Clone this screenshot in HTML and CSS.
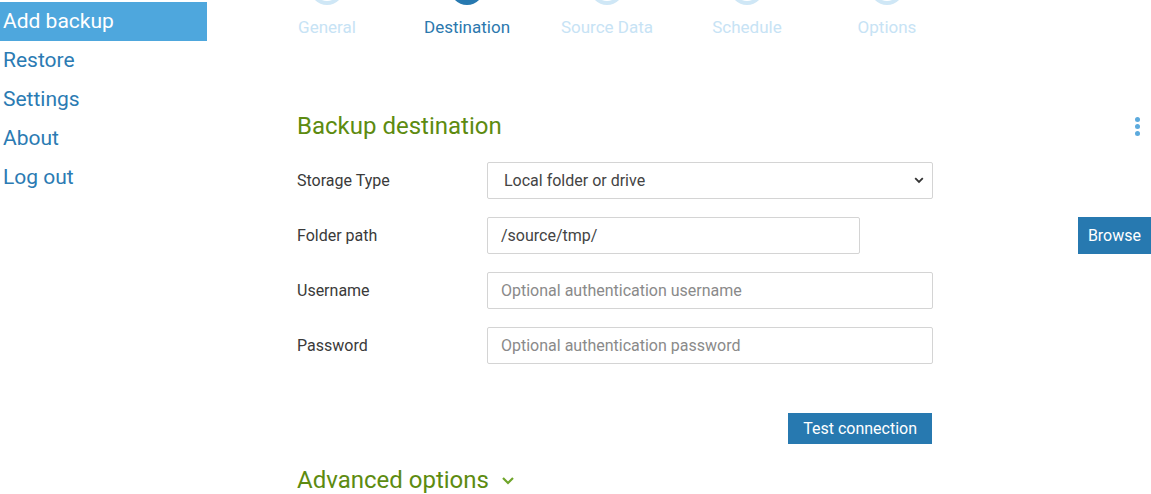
FILE: index.html
```html
<!DOCTYPE html>
<html>
<head>
<meta charset="utf-8">
<link rel="stylesheet" href="styles.css">
</head>
<body>
<div class="page">
  <nav class="sidebar">
    <a class="nav-item active">Add backup</a>
    <a class="nav-item">Restore</a>
    <a class="nav-item">Settings</a>
    <a class="nav-item">About</a>
    <a class="nav-item">Log out</a>
  </nav>
  <main class="main">
    <div class="steps">
      <div class="step"><span class="dot"></span><span class="step-label">General</span></div>
      <div class="step current"><span class="dot"></span><span class="step-label">Destination</span></div>
      <div class="step"><span class="dot"></span><span class="step-label">Source Data</span></div>
      <div class="step"><span class="dot"></span><span class="step-label">Schedule</span></div>
      <div class="step"><span class="dot"></span><span class="step-label">Options</span></div>
    </div>
    <div class="content">
      <div class="title-row">
        <h2 class="title">Backup destination</h2>
        <span class="kebab"><i></i><i></i><i></i></span>
      </div>
      <div class="form">
        <div class="row">
          <label class="label">Storage Type</label>
          <div class="field">
            <div class="select">
              <span>Local folder or drive</span>
              <svg width="10" height="7" viewBox="0 0 10 7"><path d="M1.2 1.2 L5 5 L8.8 1.2" fill="none" stroke="#333" stroke-width="1.8"/></svg>
            </div>
          </div>
        </div>
        <div class="row wide">
          <label class="label">Folder path</label>
          <div class="field grow">
            <div class="input short">/source/tmp/</div>
            <button class="btn browse">Browse</button>
          </div>
        </div>
        <div class="row">
          <label class="label">Username</label>
          <div class="field"><div class="input placeholder">Optional authentication username</div></div>
        </div>
        <div class="row">
          <label class="label">Password</label>
          <div class="field"><div class="input placeholder">Optional authentication password</div></div>
        </div>
        <div class="actions">
          <button class="btn">Test connection</button>
        </div>
      </div>
      <h2 class="title advanced">Advanced options
        <svg width="14" height="9" viewBox="0 0 14 9"><path d="M2 2 L7 7 L12 2" fill="none" stroke="#6fa52a" stroke-width="2.2"/></svg>
      </h2>
    </div>
  </main>
</div>
</body>
</html>
```

FILE: styles.css
```css
* { box-sizing: border-box; }
html, body { margin: 0; padding: 0; background: #fff; }
body {
  font-family: Roboto, "Liberation Sans", sans-serif;
  overflow: hidden;
  width: 1151px;
  height: 494px;
}
.page { display: flex; align-items: flex-start; }
.sidebar {
  width: 207px;
  flex: none;
  display: flex;
  flex-direction: column;
  padding-top: 2px;
}
.nav-item {
  display: block;
  height: 39px;
  line-height: 39px;
  padding-left: 3px;
  font-size: 21px;
  color: #2b7bb3;
}
.nav-item.active { background: #4ea7dd; color: #fff; }

.main { flex: 1; min-width: 0; }
.steps {
  display: flex;
  padding-left: 50px;
}
.step {
  width: 140px;
  display: flex;
  flex-direction: column;
  align-items: center;
}
.dot {
  width: 34px;
  height: 34px;
  margin-top: -29px;
  border-radius: 50%;
  border: 4px solid #cfe7f6;
}
.step.current .dot { background: #2779b0; border-color: #2779b0; }
.step-label {
  margin-top: 11px;
  font-size: 17px;
  line-height: 22px;
  color: #c7e3f5;
}
.step.current .step-label { color: #2b78ae; }

.content { padding-left: 90px; padding-top: 72px; }
.title-row { display: flex; align-items: center; justify-content: space-between; padding-right: 11px; }
.title {
  margin: 0;
  font-weight: 400;
  font-size: 24px;
  line-height: 32px;
  color: #5d8b10;
}
.kebab { display: flex; flex-direction: column; gap: 2px; }
.kebab i { width: 5px; height: 5px; border-radius: 50%; background: #5caadd; display: block; }

.form { margin-top: 20px; width: 636px; }
.row { display: flex; align-items: center; height: 37px; margin-bottom: 18px; }
.row.wide { width: 854px; }
.label { width: 190px; flex: none; font-size: 16px; color: #3a3a3a; }
.field { width: 446px; display: flex; align-items: center; }
.field.grow { flex: 1; width: auto; justify-content: space-between; }
.select, .input {
  width: 446px;
  height: 37px;
  border: 1px solid #d4d4d4;
  border-radius: 2px;
  font-size: 16px;
  color: #444;
  display: flex;
  align-items: center;
  padding-left: 13px;
}
.select { justify-content: space-between; padding-left: 16px; padding-right: 8px; }
.input.short { width: 373px; }
.input.placeholder { color: #8a8a8a; }
.btn {
  font-family: inherit;
  border: 0;
  background: #2779b0;
  color: #fff;
  font-size: 16px;
  height: 31px;
  padding: 0 15px;
}
.browse { height: 37px; padding: 0 10px; }
.actions { display: flex; justify-content: flex-end; margin-top: 49px; padding-right: 1px; }
.advanced { margin-top: 20px; display: flex; align-items: center; gap: 12px; }
```
